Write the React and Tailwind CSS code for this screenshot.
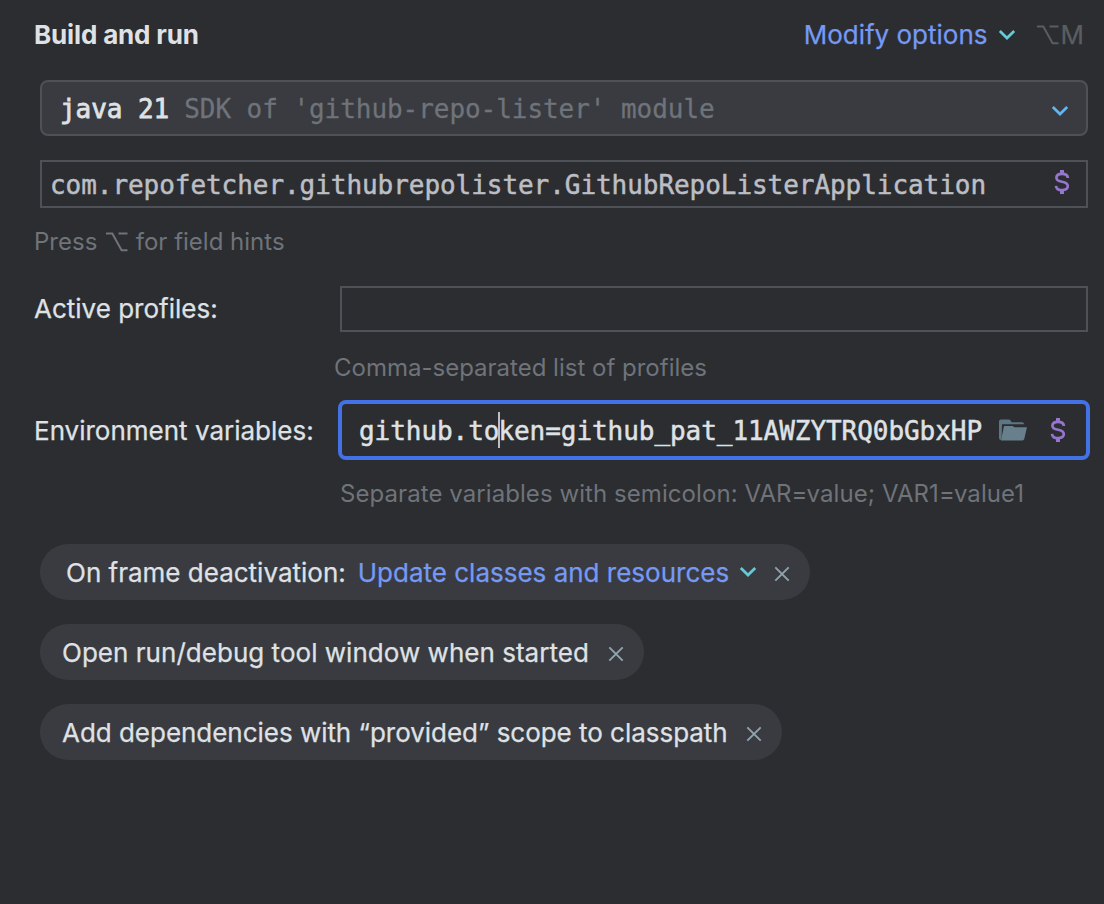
const MONO = "font-['DejaVu_Sans_Mono',monospace] text-[26px] leading-[32px] tracking-[-0.053px] whitespace-pre";
const UI = "text-[26px] leading-[32px] whitespace-pre [-webkit-text-stroke:0.25px_currentColor]";
const HINT = "text-[24px] leading-[30px] text-[#6f737a] whitespace-pre";

function Chevron({ className = "" }) {
  return (
    <svg width="18" height="12" viewBox="0 0 18 12" fill="none" className={className}>
      <path d="M1.8 2 L9 9 L16.2 2" stroke="currentColor" strokeWidth="2.7" />
    </svg>
  );
}

function Close() {
  return (
    <svg width="16" height="16" viewBox="0 0 16 16" fill="none" className="mt-[4px] shrink-0 text-[#90a4ae]">
      <path d="M1.3 1.3 L14.7 14.7 M14.7 1.3 L1.3 14.7" stroke="currentColor" strokeWidth="1.9" />
    </svg>
  );
}

function Option({ className = "" }) {
  return (
    <svg width="22" height="20" viewBox="0 0 22 20" fill="none" className={`shrink-0 ${className}`}>
      <path d="M0 1.5 H6.3 L15.6 18.3 H21.5 M12.5 1.5 H21.5" stroke="currentColor" strokeWidth="2" />
    </svg>
  );
}

function Dollar({ className = "" }) {
  return (
    <svg width="16" height="26" viewBox="0 0 16 26" fill="none" className={`shrink-0 text-[#9575cd] ${className}`}>
      <path d="M13.9 9 C13.7 6 11.4 4.8 8 4.8 C4.5 4.8 2.4 6.2 2.4 8.7 C2.4 11.2 4.5 12.1 8 12.8 C11.6 13.5 13.8 14.5 13.8 17.1 C13.8 19.7 11.5 21.2 8 21.2 C4.4 21.2 2.2 19.6 2 16.8" stroke="currentColor" strokeWidth="2.7" />
      <path d="M6 1 H10 V5 H6 Z M6 21 H10 V25 H6 Z" fill="currentColor" />
    </svg>
  );
}

function Folder() {
  return (
    <svg width="30" height="24" viewBox="0 0 30 24" className="shrink-0">
      <path d="M1 3.5 Q1 1.5 3 1.5 H10.5 Q12 1.5 12.7 2.7 L13.7 4.3 H24 Q26 4.3 26.3 6.3 H4 L3.6 20 L3 22 Q1 22 1 20 Z" fill="#5d7683" />
      <path d="M6 8 H14.5 L16.5 9.2 H29 L26.3 20.8 Q25.8 22.6 24.3 22.6 H3 Z" fill="#67808c" />
    </svg>
  );
}

export default function App() {
  return (
    <main className="flex h-[904px] w-[1104px] flex-col overflow-hidden bg-[#2b2d30] font-['Inter',sans-serif] text-[#dfe1e5]">
      <header className="flex h-[80px] shrink-0 items-center pb-[10px] pl-[34px] pr-[20px]">
        <h1 className="grow text-[26px] leading-[32px] font-bold tracking-[-0.15px]">Build and run</h1>
        <button className={`${UI} text-[#7599f5]`}>Modify options</button>
        <Chevron className="ml-[10px] text-[#65cad6]" />
        <div className="ml-[21px] flex items-center text-[#5a5d61]">
          <Option className="mr-[2px]" />
          <span className={UI}>M</span>
        </div>
      </header>

      <div className="ml-[40px] flex h-[56px] w-[1048px] shrink-0 items-center rounded-[8px] border-2 border-[#4e5157] bg-[#393b40] pl-[18px] pr-[17px]">
        <span className={`${MONO} pt-[2px] [-webkit-text-stroke:0.8px_currentColor]`}>java 21</span>
        <span className={`${MONO} ml-[15px] grow pt-[2px] text-[#6f737a] [-webkit-text-stroke:0.3px_currentColor]`}>SDK of 'github-repo-lister' module</span>
        <Chevron className="mt-[5px] text-[#62b5f0]" />
      </div>

      <div className="mt-[24px] ml-[40px] flex h-[48px] w-[1048px] shrink-0 items-center border-2 border-[#4e5157] pl-[8px] pr-[16px]">
        <span className={`${MONO} grow pt-[2px] text-[#bcbec4] [-webkit-text-stroke:0.5px_currentColor]`}>com.repofetcher.githubrepolister.GithubRepoListerApplication</span>
        <Dollar className="mb-[4px]" />
      </div>

      <div className={`${HINT} mt-[19px] flex items-center pl-[34px]`}>
        <span>Press </span>
        <Option className="ml-[2px] mr-px" />
        <span> for field hints</span>
      </div>

      <div className="mt-[29px] flex h-[46px] shrink-0 items-center pl-[34px]">
        <label className={`${UI} w-[306px]`}>Active profiles:</label>
        <div className="h-[46px] w-[748px] border-2 border-[#4e5157]" />
      </div>
      <p className={`${HINT} mt-[21px] pl-[334px]`}>Comma-separated list of profiles</p>

      <div className="mt-[17px] flex h-[60px] shrink-0 items-center pl-[34px]">
        <label className={`${UI} w-[304px] pt-[2px]`}>Environment variables:</label>
        <div className="flex h-[60px] w-[752px] items-center rounded-[8px] border-4 border-[#4371e6] pl-[17px]">
          <span className={`${MONO} pt-[2px] [-webkit-text-stroke:0.5px_currentColor]`}>github.to</span>
          <span className="-mr-[2px] -ml-px h-[36px] w-[2px] bg-[#bcbec4]" />
          <span className={`${MONO} pt-[2px] [-webkit-text-stroke:0.5px_currentColor]`}>ken=github_pat_11AWZYTRQ0bGbxHP</span>
          <span className="ml-[16px] flex items-center gap-[22px]">
            <Folder />
            <Dollar />
          </span>
        </div>
      </div>
      <p className={`${HINT} mt-[19px] pl-[340px] tracking-[0.07px]`}>Separate variables with semicolon: VAR=value; VAR1=value1</p>

      <section className="mt-[35px] flex flex-col items-start gap-[24px] pl-[40px]">
        <div className="flex h-[56px] w-[770px] items-center rounded-full bg-[#393b40] pl-[26px] pr-[20px]">
          <span className={`${UI} pt-[2px]`}>On frame deactivation:</span>
          <span className={`${UI} ml-[12px] grow pt-[2px] text-[#7599f5]`}>Update classes and resources</span>
          <Chevron className="mr-[17px] text-[#65cad6]" />
          <Close />
        </div>
        <div className="flex h-[56px] w-[604px] items-center rounded-full bg-[#393b40] pl-[22px] pr-[20px]">
          <span className={`${UI} grow pt-[2px] tracking-[0.03px]`}>Open run/debug tool window when started</span>
          <Close />
        </div>
        <div className="flex h-[56px] w-[742px] items-center rounded-full bg-[#393b40] pl-[22px] pr-[20px]">
          <span className={`${UI} grow pt-[2px] tracking-[-0.03px]`}>Add dependencies with “provided” scope to classpath</span>
          <Close />
        </div>
      </section>
    </main>
  );
}
